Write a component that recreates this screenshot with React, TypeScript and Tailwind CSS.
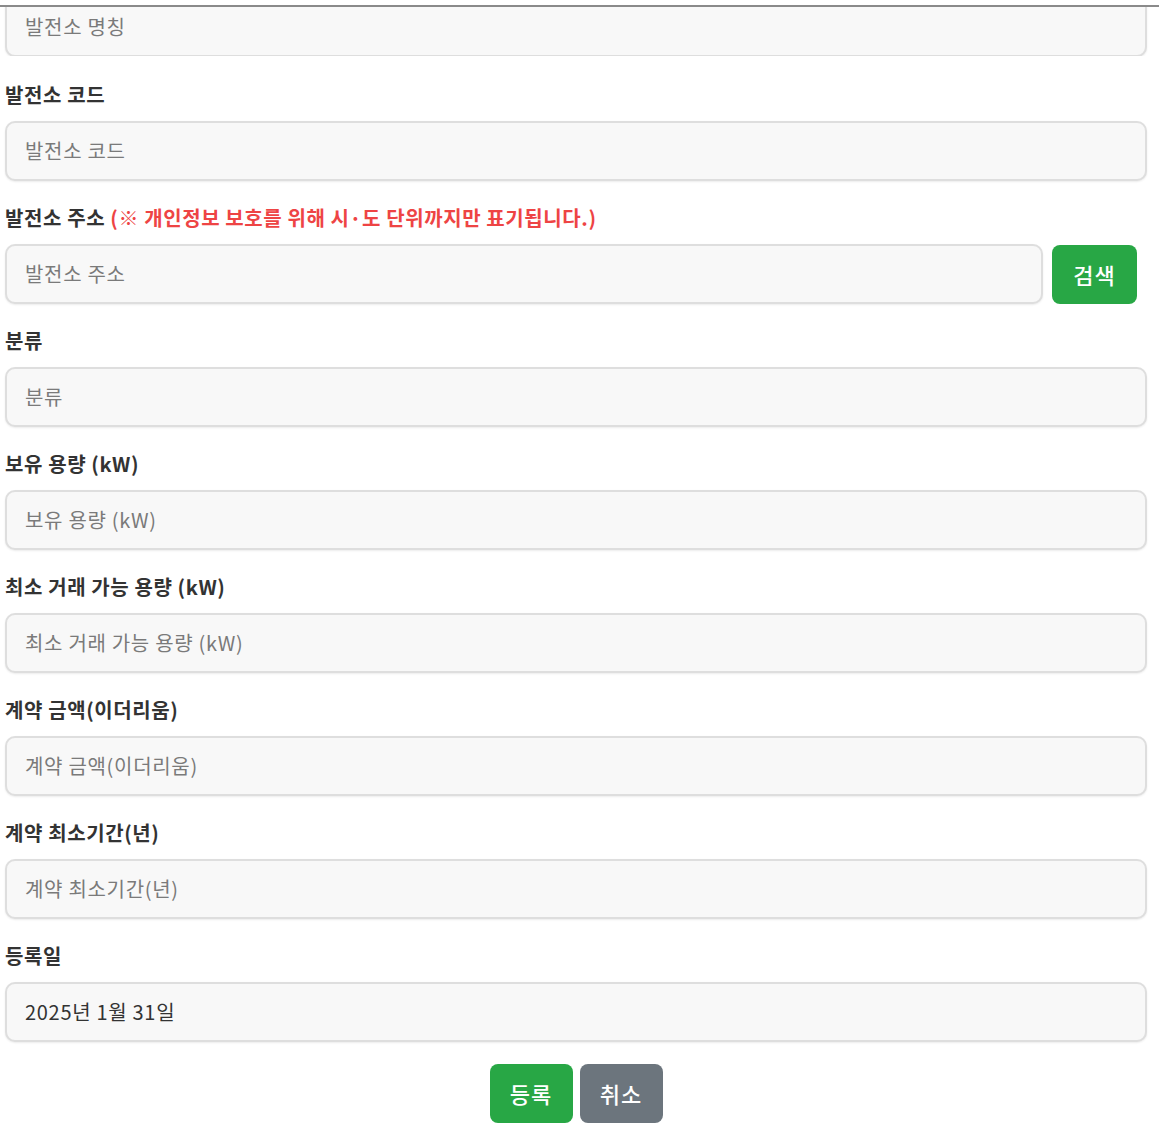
import React from "react";

const font = { fontFamily: '"Noto Sans CJK KR", "Noto Sans", sans-serif' };

function Label({ children }: { children: React.ReactNode }) {
  return (
    <div className="h-[28px] leading-[28px] text-[20px] font-bold text-[#333] mb-[12px] tracking-[0.6px] whitespace-nowrap">
      {children}
    </div>
  );
}

function Field({ value, placeholder }: { value?: string; placeholder: string }) {
  return (
    <div className="h-[60px] rounded-[10px] border-2 border-[#dedede] bg-[#f8f8f8] shadow-[0_1px_2px_rgba(0,0,0,0.08)] flex items-center px-[18px] text-[20px] tracking-[0.7px]">
      {value ? (
        <span className="text-[#333]">{value}</span>
      ) : (
        <span className="text-[#7a7a7a]">{placeholder}</span>
      )}
    </div>
  );
}

const fields: { label: React.ReactNode; placeholder: string; value?: string }[] = [
  { label: "분류", placeholder: "분류" },
  { label: "보유 용량 (kW)", placeholder: "보유 용량 (kW)" },
  { label: "최소 거래 가능 용량 (kW)", placeholder: "최소 거래 가능 용량 (kW)" },
  { label: "계약 금액(이더리움)", placeholder: "계약 금액(이더리움)" },
  { label: "계약 최소기간(년)", placeholder: "계약 최소기간(년)" },
  { label: "등록일", placeholder: "", value: "2025년 1월 31일" },
];

export default function App() {
  return (
    <div className="w-[1159px] h-[1136px] bg-white overflow-hidden" style={font}>
      <div className="pt-[5px]">
        <div className="border-t-2 border-[#8a8a8a] h-[51px] overflow-hidden pl-[5px] pr-[12px]">
          <div className="-mt-[10px]">
            <Field placeholder="발전소 명칭" />
          </div>
        </div>
      </div>
      <div className="pl-[5px] pr-[12px]">
        <div className="mt-[25px]">
          <Label>발전소 코드</Label>
          <Field placeholder="발전소 코드" />
        </div>
        <div className="mt-[23px]">
          <Label>
            발전소 주소{" "}
            <span className="text-[#ee4444]">(※ 개인정보 보호를 위해 시·도 단위까지만 표기됩니다.)</span>
          </Label>
          <div className="flex gap-[9px] mr-[10px]">
            <div className="flex-1">
              <Field placeholder="발전소 주소" />
            </div>
            <button className="w-[85px] h-[59px] mt-[1px] rounded-[8px] bg-[#28a745] text-white text-[22px] tracking-[1px] font-medium">
              검색
            </button>
          </div>
        </div>
        {fields.map((f, i) => (
          <div key={i} className="mt-[23px]">
            <Label>{f.label}</Label>
            <Field placeholder={f.placeholder} value={f.value} />
          </div>
        ))}
        <div className="mt-[22px] flex justify-center gap-[7px]">
          <button className="w-[83px] h-[59px] rounded-[8px] bg-[#28a745] text-white text-[22px] tracking-[1px] font-medium">
            등록
          </button>
          <button className="w-[83px] h-[59px] rounded-[8px] bg-[#6c757d] text-white text-[22px] tracking-[1px] font-medium">
            취소
          </button>
        </div>
      </div>
    </div>
  );
}
